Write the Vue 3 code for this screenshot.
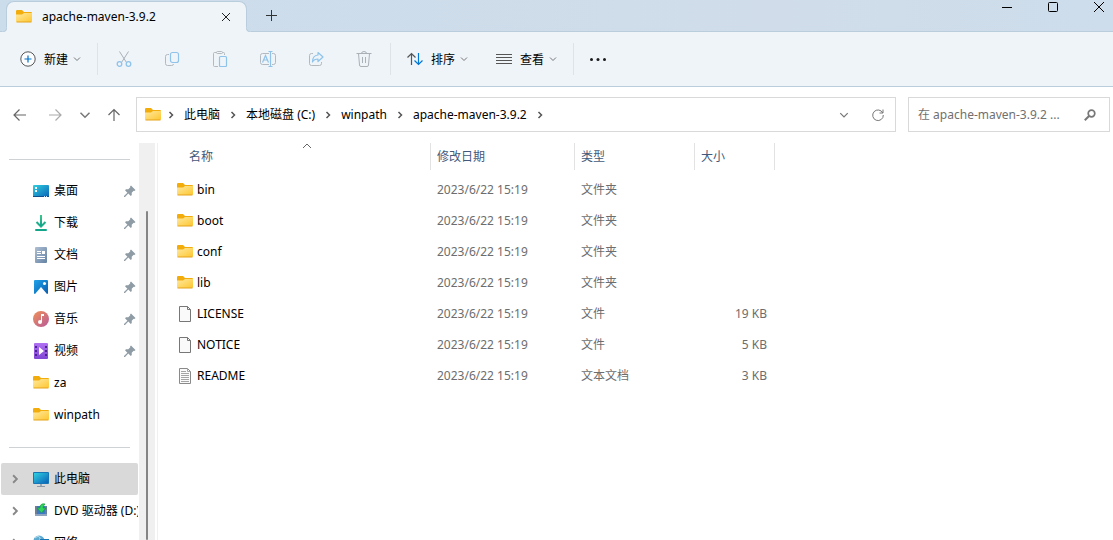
<script setup>
import { ref } from 'vue'

const crumbs = ['此电脑', '本地磁盘 (C:)', 'winpath', 'apache-maven-3.9.2']

const quickAccess = [
  { name: '桌面', icon: 'desktop', pinned: true },
  { name: '下载', icon: 'download', pinned: true },
  { name: '文档', icon: 'document', pinned: true },
  { name: '图片', icon: 'picture', pinned: true },
  { name: '音乐', icon: 'music', pinned: true },
  { name: '视频', icon: 'video', pinned: true },
  { name: 'za', icon: 'folder', pinned: false },
  { name: 'winpath', icon: 'folder', pinned: false },
]

const devices = [
  { name: '此电脑', icon: 'pc', active: true },
  { name: 'DVD 驱动器 (D:)', icon: 'dvd', active: false },
  { name: '网络', icon: 'network', active: false },
]

const tools = [
  { label: '剪切', icon: 'cut' },
  { label: '复制', icon: 'copy' },
  { label: '粘贴', icon: 'paste' },
  { label: '重命名', icon: 'rename' },
  { label: '共享', icon: 'share' },
  { label: '删除', icon: 'delete' },
]

const modified = '2023/6/22 15:19'
const files = [
  { name: 'bin', icon: 'folder', type: '文件夹', size: '' },
  { name: 'boot', icon: 'folder', type: '文件夹', size: '' },
  { name: 'conf', icon: 'folder', type: '文件夹', size: '' },
  { name: 'lib', icon: 'folder', type: '文件夹', size: '' },
  { name: 'LICENSE', icon: 'file', type: '文件', size: '19 KB' },
  { name: 'NOTICE', icon: 'file', type: '文件', size: '5 KB' },
  { name: 'README', icon: 'text', type: '文本文档', size: '3 KB' },
]

const query = ref('')
</script>

<template>
  <div class="window">
    <svg class="sprite" aria-hidden="true">
      <defs>
        <linearGradient id="g-folder" x1="0" y1="0" x2="1" y2="1">
          <stop offset="0" stop-color="#ffe9a0" /><stop offset="1" stop-color="#fdc62f" />
        </linearGradient>
        <linearGradient id="g-desk" x1="0" y1="0" x2="1" y2="1">
          <stop offset="0" stop-color="#2fd0e0" /><stop offset="1" stop-color="#0a63b8" />
        </linearGradient>
        <linearGradient id="g-down" x1="0" y1="0" x2="0" y2="1">
          <stop offset="0" stop-color="#3cc98c" /><stop offset="1" stop-color="#0fa08c" />
        </linearGradient>
        <linearGradient id="g-doc" x1="0" y1="0" x2="1" y2="1">
          <stop offset="0" stop-color="#aebfd3" /><stop offset="1" stop-color="#6482a4" />
        </linearGradient>
        <linearGradient id="g-pic" x1="0" y1="0" x2="1" y2="1">
          <stop offset="0" stop-color="#1fa3ea" /><stop offset="1" stop-color="#0b5cad" />
        </linearGradient>
        <linearGradient id="g-music" x1="0" y1="0" x2="1" y2="1">
          <stop offset="0" stop-color="#f09055" /><stop offset="1" stop-color="#b75a9c" />
        </linearGradient>
        <linearGradient id="g-video" x1="0" y1="0" x2="0" y2="1">
          <stop offset="0" stop-color="#b070f2" /><stop offset="1" stop-color="#8046d4" />
        </linearGradient>
      </defs>
      <symbol id="i-folder" viewBox="0 1 16 16">
        <path d="M0 3.2Q0 2 1.2 2H6l2 2h7q1 0 1 1v2H0z" fill="#f2ac0c" />
        <path d="M0 6.500h6L8 5h8v8q0 1-1 1H1q-1 0-1-1z" fill="url(#g-folder)" />
        <path d="M.5 14h15" stroke="#e5a31c" stroke-width="1" />
      </symbol>
      <symbol id="i-desktop" viewBox="0 0 16 16">
        <rect y="2" width="16" height="12" rx="1" fill="url(#g-desk)" />
        <path d="M2 4h2v2H2zM2 7h2v2H2z" fill="#fff" />
        <path d="M0 13h16v1H0z" fill="#0d4f8d" />
        <path d="M11 13h1v1h-1zM13 13h1v1h-1z" fill="#bfe6ff" />
      </symbol>
      <symbol id="i-download" viewBox="0 0 16 16">
        <path d="M3.500 7 8 11.500 12.500 7" fill="none" stroke="#1fae8c" stroke-width="2" />
        <path d="M7 0h2v11H7z" fill="url(#g-down)" />
        <rect x="2" y="14" width="12" height="2" rx="1" fill="#12a58a" />
      </symbol>
      <symbol id="i-document" viewBox="0 0 16 16">
        <rect x="2" width="12" height="16" rx="1" fill="url(#g-doc)" />
        <path d="M4 4.500h4M4 6.500h4M4 9.500h8M4 11.500h8" stroke="#fff" />
        <path d="M9 4h3v3H9z" fill="#fff" />
      </symbol>
      <symbol id="i-picture" viewBox="0 0 16 16">
        <rect x="1" y="1" width="14" height="14" rx="1" fill="url(#g-pic)" />
        <path d="m2 15 6-7 6 7z" fill="#fff" />
        <circle cx="11.500" cy="4.500" r="1.500" fill="#fff" />
      </symbol>
      <symbol id="i-music" viewBox="0 0 16 16">
        <circle cx="8" cy="8" r="8" fill="url(#g-music)" />
        <path d="M8 3h3v2H9v6z" fill="#fff" />
        <path d="M8 3h1v8H8z" fill="#fff" />
        <circle cx="7" cy="11" r="2" fill="#fff" />
      </symbol>
      <symbol id="i-video" viewBox="0 0 16 16">
        <rect x="1" width="14" height="16" rx="1" fill="url(#g-video)" />
        <path d="M2 3h2v2H2zM2 7h2v2H2zM2 11h2v2H2zM12 3h2v2h-2zM12 7h2v2h-2zM12 11h2v2h-2z" fill="#4b2390" />
        <path d="m6 4 5 4-5 4z" fill="#fff" />
      </symbol>
      <symbol id="i-pc" viewBox="0 0 16 16">
        <rect y="1" width="16" height="12" rx="1" fill="#1776b5" />
        <rect x="1" y="2" width="14" height="10" fill="url(#g-desk)" />
        <path d="M7 13h2v2H7z" fill="#9aa8b3" />
        <path d="M4 15.500h8" stroke="#8c9aa5" />
      </symbol>
      <symbol id="i-dvd" viewBox="0 0 16 16">
        <path d="M2 3h12v9H2z" fill="#3d78c4" />
        <path d="M2 3h2v9H2zM12 3h2v9h-2z" fill="#6b7f99" />
        <path d="M2 11h12v2H2z" fill="#8ea3bd" />
        <path d="M12 1Q7 0 7 5H4l4.500 5L13 5h-3q0-2 2-4z" fill="#2fd45c" stroke="#159a3c" stroke-width=".7" />
      </symbol>
      <symbol id="i-network" viewBox="0 0 16 16">
        <circle cx="6" cy="6" r="5.500" fill="#5da9cf" />
        <path d="M2 3q4-3 5 0T3 6M5 8q4-1 5 2" fill="none" stroke="#b9e2f1" />
        <path d="M7 4h9v9H7z" fill="#1776b5" /><path d="M8 5h7v6H8z" fill="#2bb5d8" />
      </symbol>
      <symbol id="i-file" viewBox="0 0 16 16">
        <path d="M2.500.5h8l3 3v12h-11z" fill="#fafafa" stroke="#777" />
        <path d="M10.500.5v3h3" fill="none" stroke="#777" />
      </symbol>
      <symbol id="i-text" viewBox="0 0 16 16">
        <path d="M2.500.5h8l3 3v12h-11z" fill="#fafafa" stroke="#8a8a8a" />
        <path d="M10.500.5v3h3M4 3.500h5M4 5.500h8M4 7.500h8M4 9.500h8M4 11.500h8M4 13.500h8" fill="none" stroke="#a4a4a4" />
      </symbol>
      <symbol id="i-pin" viewBox="0 0 12 12">
        <path d="m7 .5 4.500 4.500-1 1-.8-.2-2 2 .1 2.300-1 1-2.500-2.500L1 12H0v-1l3.400-3.300L1 5.200l1-1 2.300.1 2-2L6 1.500z" fill="#8f9ca5" />
      </symbol>
      <symbol id="i-down" viewBox="0 0 8 8">
        <path d="m1 2.500 3 3 3-3" fill="none" stroke="currentColor" />
      </symbol>
      <symbol id="i-right" viewBox="0 0 8 8">
        <path d="m2.500 1 3 3-3 3" fill="none" stroke="currentColor" stroke-width="1.500" />
      </symbol>

      <symbol id="i-cut" viewBox="0 0 16 16">
        <path d="m3.500.5 7 11M12.500.5l-7 11" fill="none" stroke="#a9b0b6" />
        <g fill="none" stroke="#8fc3ea" stroke-width="1.300"><circle cx="3.500" cy="13" r="2.300" /><circle cx="12.500" cy="13" r="2.300" /></g>
      </symbol>
      <symbol id="i-copy" viewBox="0 0 16 16">
        <path d="M5 3.500H3.500q-2 0-2 2v7q0 2 2 2h4q2 0 2-1.500" fill="none" stroke="#b3b9be" />
        <rect x="6.500" y="1.500" width="8" height="10" rx="2" fill="none" stroke="#8fc3ea" stroke-width="1.200" />
      </symbol>
      <symbol id="i-paste" viewBox="0 0 16 16">
        <path d="M4.500 1.500h-2q-1 0-1 1v12q0 1 1 1H6M10.500 1.500h1q1 0 1 1V4" fill="none" stroke="#b3b9be" />
        <rect x="4.500" y=".5" width="6" height="2" rx="1" fill="none" stroke="#b3b9be" />
        <rect x="7.500" y="5.500" width="7" height="10" rx="1" fill="none" stroke="#8fc3ea" stroke-width="1.200" />
      </symbol>
      <symbol id="i-rename" viewBox="0 0 16 16">
        <path d="M9 2.500H2.500q-2 0-2 2v7q0 2 2 2H9M12 2.500h1.500q2 0 2 2v7q0 2-2 2H12" fill="none" stroke="#b3b9be" />
        <path d="M10.500.5v15M8.500.5h4M8.500 15.500h4M2.500 11.500l3-7 3 7M3.500 9h4" fill="none" stroke="#8fc3ea" stroke-width="1.200" />
      </symbol>
      <symbol id="i-share" viewBox="0 0 16 16">
        <path d="M5 2.500H3.500q-2 0-2 2v8q0 2 2 2h8q2 0 2-2V11" fill="none" stroke="#b3b9be" />
        <path d="M10 1.500 15 6l-5 4.500V8Q6 8 4.500 11 4.500 4.500 10 4z" fill="none" stroke="#8fc3ea" stroke-linejoin="round" stroke-width="1.200" />
      </symbol>
      <symbol id="i-delete" viewBox="0 0 16 16">
        <path d="M.500 2.500h15M5.500 2.500q0-2 2.500-2t2.500 2M2.500 2.500l1 11.500q0 1.500 1.500 1.500h6q1.500 0 1.500-1.500l1-11.500M6.500 6v6M9.500 6v6" fill="none" stroke="#a9b0b6" />
      </symbol>
    </svg>

    <header class="titlebar">
      <div class="tab">
        <svg class="icon"><use href="#i-folder" /></svg>
        <span class="tab-title">apache-maven-3.9.2</span>
        <button class="tab-close" aria-label="关闭标签页">
          <svg viewBox="0 0 10 10"><path d="m1 1 8 8M9 1 1 9" stroke="#222" /></svg>
        </button>
      </div>
      <button class="tab-add" aria-label="新标签页">
        <svg viewBox="0 0 11 11"><path d="M5.500 0v11M0 5.500h11" stroke="#333" /></svg>
      </button>
      <div class="controls">
        <button aria-label="最小化"><svg viewBox="0 0 10 10"><path d="M0 5.500h10" stroke="#000" /></svg></button>
        <button aria-label="最大化"><svg viewBox="0 0 10 10"><rect x=".5" y=".5" width="9" height="9" rx="1" fill="none" stroke="#000" /></svg></button>
        <button aria-label="关闭"><svg viewBox="0 0 10 10"><path d="m0 0 10 10M10 0 0 10" stroke="#000" /></svg></button>
      </div>
    </header>

    <div class="toolbar">
      <button class="menu">
        <svg class="icon" viewBox="0 0 16 16">
          <circle cx="8" cy="8" r="7.200" fill="#fafcfe" stroke="#555" />
          <path d="M8 4.500v7M4.500 8h7" stroke="#0070c8" stroke-width="1.200" />
        </svg>
        <span>新建</span>
        <svg class="caret"><use href="#i-down" /></svg>
      </button>
      <i class="divider"></i>
      <button v-for="t in tools" :key="t.icon" class="tool" :aria-label="t.label" disabled>
        <svg class="icon"><use :href="'#i-' + t.icon" /></svg>
      </button>
      <i class="divider"></i>
      <button class="menu">
        <svg class="icon" viewBox="0 0 16 16">
          <path d="M4.500 14V2.500M.500 6.500l4-4 4 4" fill="none" stroke="#555" stroke-width="1.200" />
          <path d="M11.500 2v11.500M7.500 9.500l4 4 4-4" fill="none" stroke="#0078d4" stroke-width="1.200" />
        </svg>
        <span>排序</span>
        <svg class="caret"><use href="#i-down" /></svg>
      </button>
      <button class="menu">
        <svg class="icon" viewBox="0 0 16 16">
          <path d="M0 3.500h16M0 6.500h16M0 9.500h16M0 12.500h16" stroke="#555" />
        </svg>
        <span>查看</span>
        <svg class="caret"><use href="#i-down" /></svg>
      </button>
      <i class="divider"></i>
      <button class="more" aria-label="更多">
        <svg class="icon" viewBox="0 0 16 16"><g fill="#1a1a1a"><circle cx="1.500" cy="8.500" r="1.500" /><circle cx="8" cy="8.500" r="1.500" /><circle cx="14.500" cy="8.500" r="1.500" /></g></svg>
      </button>
    </div>

    <div class="navbar">
      <nav class="history">
        <button class="back" aria-label="后退"><svg viewBox="0 0 12 12"><path d="M0 6h12M5.500.500 0 6l5.500 5.500" fill="none" stroke="#666" stroke-width="1.200" /></svg></button>
        <button class="forward" aria-label="前进"><svg viewBox="0 0 12 12"><path d="M0 6h12M6.500.500 12 6l-5.500 5.500" fill="none" stroke="#aaa" stroke-width="1.200" /></svg></button>
        <button class="recent" aria-label="最近浏览的位置"><svg class="caret"><use href="#i-down" /></svg></button>
        <button class="up" aria-label="向上"><svg viewBox="0 0 12 12"><path d="M6 12V.500M.500 6 6 .500 11.500 6" fill="none" stroke="#666" stroke-width="1.200" /></svg></button>
      </nav>
      <div class="address">
        <svg class="icon"><use href="#i-folder" /></svg>
        <svg class="sep first"><use href="#i-right" /></svg>
        <template v-for="c in crumbs" :key="c">
          <button class="crumb">{{ c }}</button>
          <svg class="sep"><use href="#i-right" /></svg>
        </template>
        <button class="address-btn push" aria-label="以前的位置"><svg class="caret"><use href="#i-down" /></svg></button>
        <button class="address-btn" aria-label="刷新">
          <svg class="refresh" viewBox="0 0 12 12"><path d="M10.800 4A5.300 5.300 0 1 0 11.300 6M11 .500V4H7.500" fill="none" stroke="#777" /></svg>
        </button>
      </div>
      <label class="search">
        <input v-model="query" type="text" aria-label="搜索" placeholder="在 apache-maven-3.9.2 ..." />
        <svg viewBox="0 0 12 12"><circle cx="7.500" cy="4.500" r="3.300" fill="none" stroke="#777" stroke-width="1.700" /><path d="M5 7 .800 11.200" stroke="#777" stroke-width="2" /></svg>
      </label>
    </div>

    <main class="body">
      <aside class="sidebar">
        <hr />
        <a v-for="q in quickAccess" :key="q.name" class="item" href="#">
          <svg class="icon"><use :href="'#i-' + q.icon" /></svg>
          <span>{{ q.name }}</span>
          <svg v-if="q.pinned" class="pin"><use href="#i-pin" /></svg>
        </a>
        <hr />
        <a v-for="d in devices" :key="d.name" class="item" :class="{ active: d.active }" href="#">
          <svg class="expand"><use href="#i-right" /></svg>
          <svg class="icon"><use :href="'#i-' + d.icon" /></svg>
          <span>{{ d.name }}</span>
        </a>
      </aside>
      <div class="scrollbar"><div class="thumb"></div></div>
      <section class="content">
        <table>
          <colgroup><col class="c-name" /><col class="c-date" /><col class="c-type" /><col class="c-size" /></colgroup>
          <thead>
            <tr>
              <th class="sorted">
                <div>名称</div>
                <svg class="sort" viewBox="0 0 10 6"><path d="m1 5 4-4 4 4" fill="none" stroke="#666" /></svg>
              </th>
              <th><div>修改日期</div></th>
              <th><div>类型</div></th>
              <th><div>大小</div></th>
            </tr>
          </thead>
          <tbody>
            <tr v-for="f in files" :key="f.name">
              <td class="name"><div><svg class="icon"><use :href="'#i-' + f.icon" /></svg><span>{{ f.name }}</span></div></td>
              <td>{{ modified }}</td>
              <td>{{ f.type }}</td>
              <td class="size">{{ f.size }}</td>
            </tr>
          </tbody>
        </table>
      </section>
    </main>
  </div>
</template>

<style>
body {
  margin: 0;
}
</style>

<style scoped>
.window {
  display: flex;
  flex-direction: column;
  height: 100vh;
  overflow: hidden;
  background: #fff;
  color: #000;
  font: 12px/16px "Noto Sans", "Noto Sans CJK SC", sans-serif;
}
.sprite {
  position: absolute;
  width: 0;
  height: 0;
}
button {
  display: flex;
  align-items: center;
  justify-content: center;
  padding: 0;
  border: 0;
  background: none;
  color: inherit;
  font: inherit;
}
svg {
  display: block;
  flex: none;
}
.icon {
  width: 16px;
  height: 16px;
}
.caret {
  width: 8px;
  height: 8px;
  color: #777;
}

.titlebar {
  display: flex;
  flex: none;
  height: 31px;
  border-bottom: 1px solid #b9cddd;
  background: linear-gradient(90deg, #cbddeb, #d0dcea 70%, #cdddeb);
}
.tab {
  position: relative;
  display: flex;
  align-items: center;
  box-sizing: border-box;
  width: 241px;
  height: 31px;
  margin: 1px 0 0 6px;
  padding: 0 15px 0 9px;
  border: 1px solid #b9cddd;
  border-bottom: 0;
  border-radius: 8px 8px 0 0;
  background: #eff4f9;
}
.tab::before,
.tab::after {
  content: "";
  position: absolute;
  bottom: 0;
  width: 5px;
  height: 5px;
}
.tab::before {
  left: -5px;
  background: radial-gradient(circle at 0 0, #cbddeb 4px, #b9cddd 5px, #eff4f9 6px);
}
.tab::after {
  right: -5px;
  background: radial-gradient(circle at 100% 0, #cbddeb 4px, #b9cddd 5px, #eff4f9 6px);
}
.tab-title {
  flex: 1;
  margin-left: 10px;
}
.tab-close svg {
  width: 10px;
  height: 10px;
}
.tab-add {
  width: 48px;
}
.tab-add svg {
  width: 11px;
  height: 11px;
}
.controls {
  display: flex;
  gap: 18px;
  height: 14px;
  margin-left: auto;
}
.controls button {
  width: 28px;
}
.controls svg {
  width: 10px;
  height: 10px;
  overflow: visible;
}

.toolbar {
  display: flex;
  flex: none;
  align-items: center;
  gap: 4px;
  height: 54px;
  padding-left: 8px;
  border-bottom: 1px solid #b9cddd;
  background: #eff4f9;
}
.menu {
  height: 32px;
  padding: 0 12px;
}
.menu span {
  margin: 1px 5px 0 8px;
}
.tool {
  width: 44px;
  height: 32px;
}
.more {
  width: 40px;
  height: 32px;
}
.divider {
  width: 1px;
  height: 32px;
  background: #dde3e8;
}

.navbar {
  display: flex;
  flex: none;
  align-items: flex-start;
  box-sizing: border-box;
  height: 56px;
  padding: 10px 3px 0 2px;
}
.history {
  display: flex;
  align-items: center;
  height: 35px;
  margin-right: 6px;
}
.history button {
  height: 31px;
}
.history svg {
  width: 12px;
  height: 12px;
  overflow: visible;
}
.back {
  width: 36px;
}
.forward {
  width: 34px;
}
.recent {
  width: 26px;
}
.up {
  width: 32px;
}
.address,
.search {
  display: flex;
  align-items: center;
  box-sizing: border-box;
  height: 35px;
  border: 1px solid #d9d9d9;
  background: #fff;
}
.address {
  flex: 1;
  min-width: 0;
  padding-left: 8px;
}
.crumb {
  white-space: nowrap;
}
.sep {
  width: 8px;
  height: 8px;
  margin: 0 9px;
  color: #555;
}
.sep.first {
  margin-left: 6px;
}
.address-btn {
  width: 34px;
  height: 32px;
}
.address-btn .caret {
  width: 10px;
  height: 10px;
}
.push {
  margin-left: auto;
}
.refresh {
  width: 12px;
  height: 12px;
  overflow: visible;
}
.search {
  flex: none;
  width: 202px;
  margin-left: 12px;
  padding: 0 13px 0 9px;
}
.search input {
  flex: 1;
  min-width: 0;
  padding: 0;
  border: 0;
  outline: 0;
  background: none;
  font: inherit;
}
.search input::placeholder {
  color: #707070;
  opacity: 1;
}
.search svg {
  width: 12px;
  height: 12px;
}

.body {
  display: flex;
  flex: 1;
  min-height: 0;
}
.sidebar {
  flex: none;
  width: 139px;
  overflow: hidden;
}
.sidebar hr {
  height: 1px;
  margin: 16px 9px 15px;
  border: 0;
  background: #cfd2d4;
}
.item {
  display: flex;
  align-items: center;
  height: 32px;
  margin: 0 1px;
  padding-left: 32px;
  overflow: hidden;
  border-radius: 2px;
  color: #000;
  text-decoration: none;
  white-space: nowrap;
}
.item span {
  margin-left: 5px;
}
.item:has(.expand) {
  padding-left: 9px;
}
.item.active {
  background: #d9d9d9;
}
.expand {
  width: 10px;
  height: 10px;
  margin-right: 13px;
  color: #888;
}
.pin {
  width: 12px;
  height: 12px;
  margin: 0 2px 0 auto;
}
.scrollbar {
  flex: none;
  width: 16px;
  border-right: 2px solid #fff;
  background: #f0f0f0;
  background-clip: padding-box;
}
.thumb {
  width: 2px;
  height: calc(100% - 68px);
  margin: 68px auto 0;
  border-radius: 1px;
  background: #858585;
}
.content {
  flex: 1;
  min-width: 0;
  border-left: 1px solid #f0f0f0;
}

table {
  width: 617px;
  border-collapse: collapse;
  table-layout: fixed;
}
.c-name {
  width: 273px;
}
.c-date {
  width: 144px;
}
.c-type {
  width: 120px;
}
.c-size {
  width: 80px;
}
th {
  height: 31px;
  padding: 0;
  color: #44597a;
  font-weight: 400;
  text-align: left;
  vertical-align: top;
}
th div {
  box-sizing: border-box;
  height: 27px;
  padding: 6px 6px 0;
  border-right: 1px solid #e2e2e2;
}
.sorted {
  position: relative;
}
.sorted div {
  padding-left: 31px;
}
.sort {
  position: absolute;
  top: 0;
  left: 144px;
  width: 10px;
  height: 6px;
}
td {
  height: 31px;
  padding: 0 6px;
  color: #6d6d6d;
}
.name {
  padding-left: 19px;
  color: #000;
}
.name div {
  display: flex;
  align-items: center;
  gap: 4px;
}
.size {
  padding-right: 8px;
  text-align: right;
}
</style>
